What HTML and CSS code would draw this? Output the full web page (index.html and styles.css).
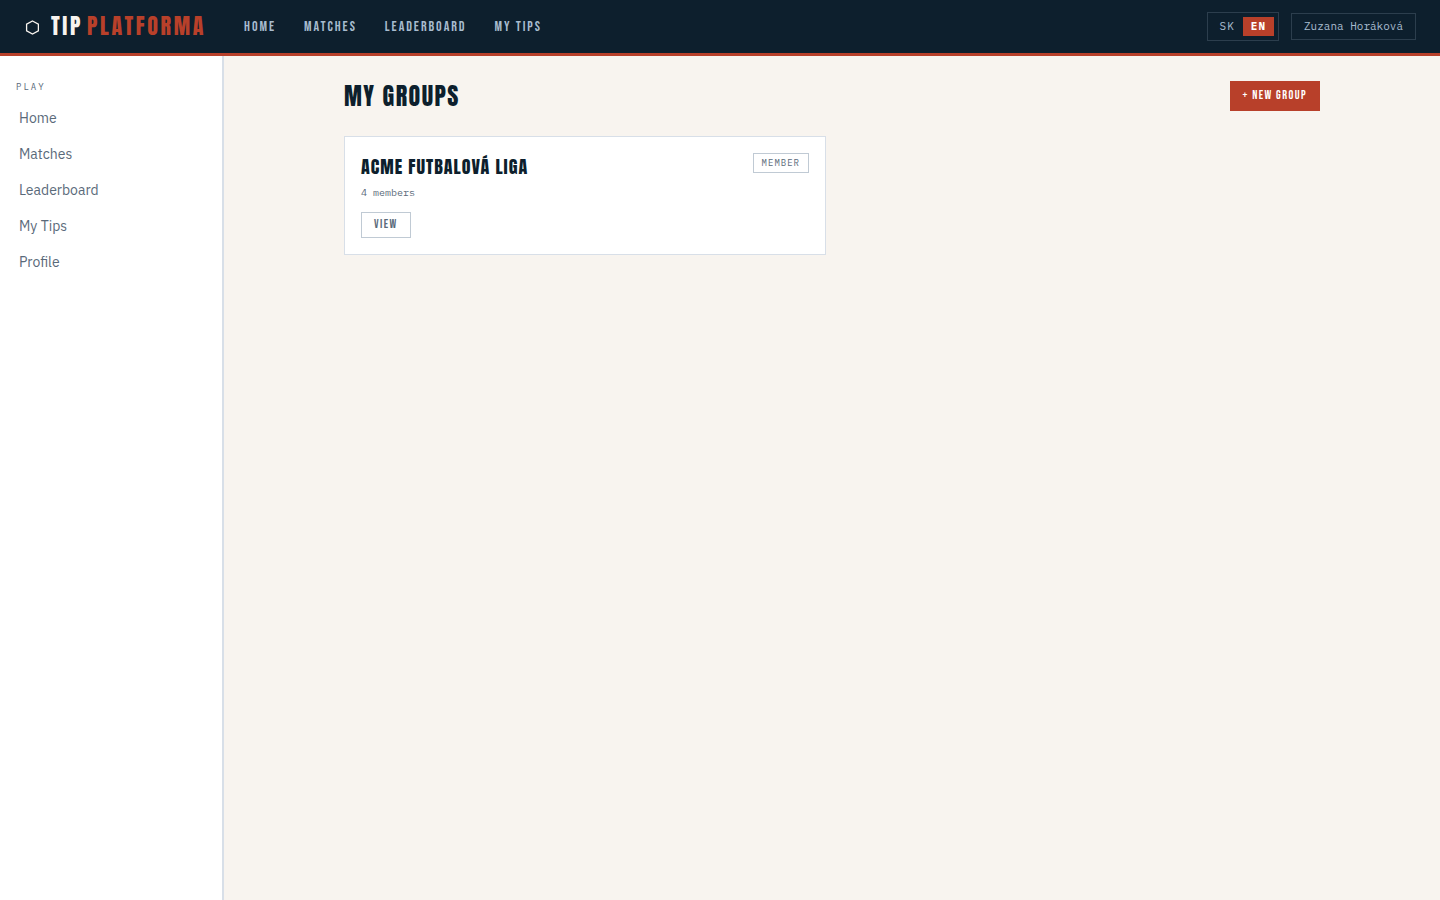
FILE: index.html
```html
<!DOCTYPE html>
<html lang="en">
<head>
<meta charset="utf-8">
<meta name="viewport" content="width=device-width, initial-scale=1">
<title>My Groups – Tip Platforma</title>
<link rel="stylesheet" href="styles.css">
</head>
<body>
<header class="topbar">
  <a class="brand" href="#">
    <svg class="brand-mark" viewBox="0 0 14 16" width="14" height="16" aria-hidden="true"><path d="M7.5 2 13.4 5.2v6.6L7.5 15 1.6 11.8V5.2z" fill="none" stroke="currentColor" stroke-width="1.3"/></svg>
    <span class="brand-name"><span>TIP</span><span class="brand-accent">PLATFORMA</span></span>
  </a>
  <nav class="topnav" aria-label="Main">
    <a href="#">HOME</a>
    <a href="#">MATCHES</a>
    <a href="#">LEADERBOARD</a>
    <a href="#">MY TIPS</a>
  </nav>
  <div class="account">
    <div class="lang">
      <button type="button" class="lang-option">SK</button>
      <button type="button" class="lang-option is-active">EN</button>
    </div>
    <a class="user" href="#">Zuzana Horáková</a>
  </div>
</header>
<div class="shell">
  <aside class="sidebar">
    <div class="sidebar-label">PLAY</div>
    <nav class="sidenav" aria-label="Play">
      <a href="#">Home</a>
      <a href="#">Matches</a>
      <a href="#">Leaderboard</a>
      <a href="#">My Tips</a>
      <a href="#">Profile</a>
    </nav>
  </aside>
  <main class="content">
    <div class="page-head">
      <h1 class="page-title">MY GROUPS</h1>
      <button type="button" class="button button-primary">+ NEW GROUP</button>
    </div>
    <div class="groups">
      <article class="card">
        <div class="card-head">
          <h2 class="card-title">ACME FUTBALOVÁ LIGA</h2>
          <span class="badge">MEMBER</span>
        </div>
        <p class="card-meta">4 members</p>
        <a class="button button-outline" href="#">VIEW</a>
      </article>
    </div>
  </main>
</div>
</body>
</html>
```
FILE: styles.css
```css
:root {
  --navy: #0d1f2d;
  --red: #b8402a;
  --cream: #f8f4ef;
  --slate: #5a6a7a;
  --line: #d8dfe8;
  --line-strong: #c0cad4;
  --mist: #a8bccf;
  --display: Anton, "Liberation Sans Narrow", "Arial Narrow", "Liberation Sans", sans-serif;
  --label: "Bebas Neue", "Liberation Sans Narrow", "Arial Narrow", "Liberation Sans", sans-serif;
  --mono: "IBM Plex Mono", "Liberation Mono", monospace;
  --body: "IBM Plex Sans", Roboto, sans-serif;
}

* { box-sizing: border-box; }

body {
  margin: 0;
  min-height: 100vh;
  display: flex;
  flex-direction: column;
  background: var(--cream);
  color: var(--navy);
  font-family: var(--body);
  font-size: 14px;
}

a { color: inherit; text-decoration: none; }
button { font: inherit; color: inherit; cursor: pointer; }

.topbar {
  display: flex;
  align-items: center;
  height: 56px;
  padding: 0 24px;
  background: var(--navy);
  border-bottom: 3px solid var(--red);
}

.brand {
  display: flex;
  align-items: center;
  gap: 12px;
  margin-right: 38px;
  padding-left: 1px;
  color: var(--cream);
  font-family: var(--display);
  font-size: 22px;
  line-height: 30px;
  letter-spacing: 0.12em;
}

.brand-name { display: flex; gap: 4px; padding-bottom: 2px; }
.brand-accent { color: var(--red); }

.topnav {
  display: flex;
  gap: 28px;
  color: var(--mist);
  font-family: var(--label);
  font-size: 14px;
  line-height: 20px;
  letter-spacing: 0.14em;
}

.account {
  display: flex;
  align-items: center;
  gap: 12px;
  margin-left: auto;
  color: var(--mist);
  font-family: var(--mono);
  font-size: 11px;
}

.lang {
  display: flex;
  padding: 4px;
  border: 1px solid #2c3e4d;
}

.lang-option {
  padding: 0 8px;
  border: 0;
  background: none;
  line-height: 19px;
  letter-spacing: 1px;
}

.lang-option.is-active {
  background: var(--red);
  color: #fff;
  font-weight: 700;
}

.user {
  padding: 4px 12px;
  border: 1px solid #2c3e4d;
  line-height: 17px;
}

.shell { display: flex; flex: 1; }

.sidebar {
  flex: 0 0 224px;
  padding: 24px 0;
  background: #fff;
  border-right: 2px solid var(--line);
}

.sidebar-label {
  padding: 0 16px;
  color: var(--slate);
  font-family: var(--mono);
  font-size: 9px;
  line-height: 14px;
  letter-spacing: 2px;
}

.sidenav {
  display: flex;
  flex-direction: column;
  padding-top: 6px;
}

.sidenav a {
  padding: 8px 16px 8px 19px;
  color: var(--slate);
  line-height: 20px;
}

.content {
  flex: 1;
  max-width: 1024px;
  margin: 0 auto;
  padding: 24px;
}

.page-head {
  display: flex;
  align-items: center;
  justify-content: space-between;
  margin-bottom: 24px;
}

.page-title {
  margin: 0;
  font-family: var(--display);
  font-size: 24px;
  font-weight: 400;
  line-height: 32px;
  letter-spacing: 0.06em;
}

.button {
  display: inline-block;
  padding: 0 12px;
  border: 1px solid;
  font-family: var(--label);
  font-size: 12px;
  letter-spacing: 0.12em;
}

.button-primary {
  border-color: var(--red);
  background: var(--red);
  color: #fff;
  line-height: 28px;
}

.button-outline {
  border-color: var(--line-strong);
  color: var(--slate);
  line-height: 24px;
}

.groups {
  display: grid;
  grid-template-columns: repeat(2, 1fr);
  gap: 12px;
}

.card {
  padding: 16px;
  background: #fff;
  border: 1px solid var(--line);
}

.card-head {
  display: flex;
  align-items: flex-start;
  justify-content: space-between;
}

.card-title {
  margin: 0;
  font-family: var(--display);
  font-size: 18px;
  font-weight: 400;
  line-height: 28px;
  letter-spacing: 1px;
}

.badge {
  padding: 0 8px;
  border: 1px solid var(--line-strong);
  color: var(--slate);
  font-family: var(--mono);
  font-size: 9px;
  line-height: 18px;
  letter-spacing: 1px;
}

.card-meta {
  margin: 4px 0 11px;
  color: var(--slate);
  font-family: var(--mono);
  font-size: 10px;
  line-height: 16px;
}
```
